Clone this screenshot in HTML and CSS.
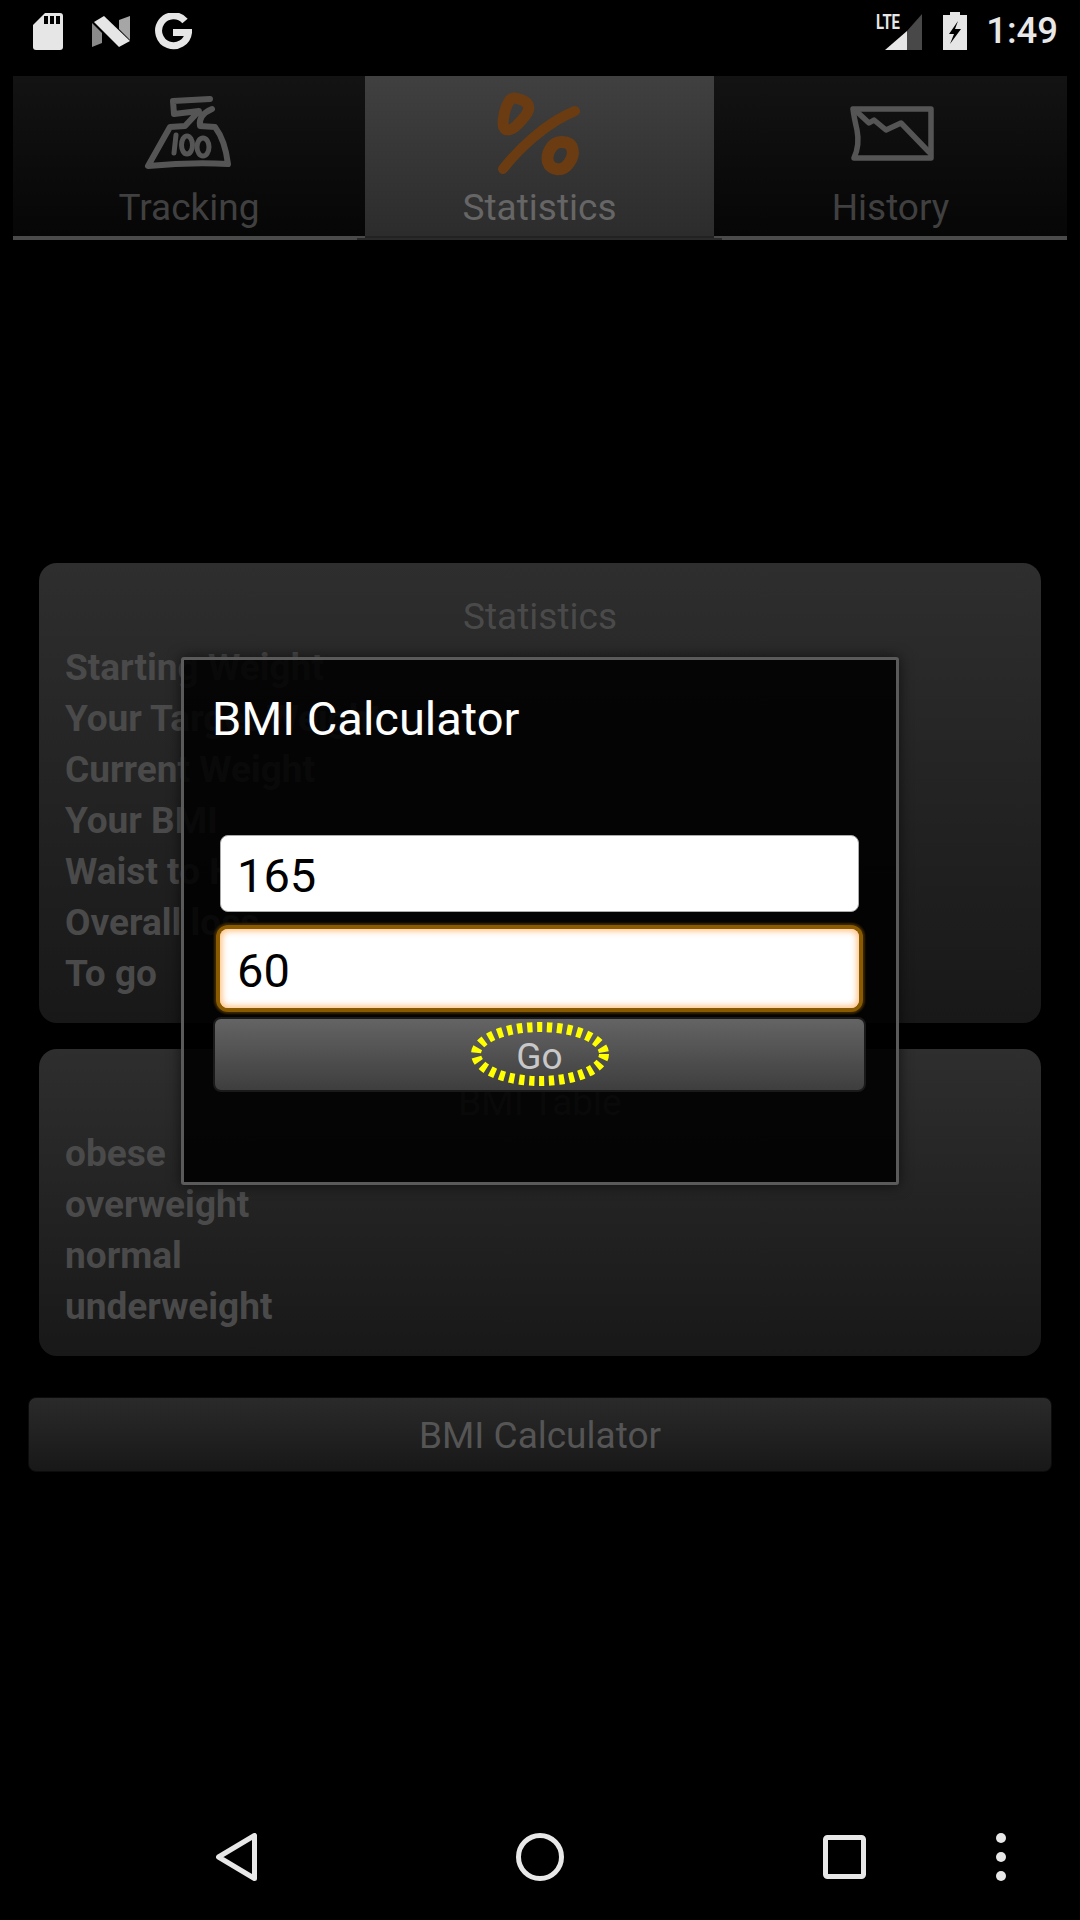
FILE: index.html
```html
<!DOCTYPE html>
<html lang="en">
<head>
  <meta charset="UTF-8" />
  <meta name="viewport" content="width=device-width, initial-scale=1.0" />
  <title>BMI Calculator</title>
  <link rel="stylesheet" href="styles.css">
</head>
<body>
  <div class="status-bar">
    <svg class="sd-icon" width="30" height="37" viewBox="0 0 30 37">
      <path fill="#e6e6e6" d="M12 0H27a3 3 0 0 1 3 3V34a3 3 0 0 1-3 3H3a3 3 0 0 1-3-3V12Z"/>
      <path fill="#000" d="M11 3h4v8h-4zM17 3h4v8h-4zM23 3h4v8h-4z"/>
    </svg>
    <svg class="n-icon" width="38" height="31" viewBox="0 0 38 31">
      <path fill="#8a8a8a" d="M0 7L10 17V27L0 31Z"/>
      <path fill="#a6a6a6" d="M27 4L38 0V24L27 13Z"/>
      <path fill="#e6e6e6" d="M2 6L12 0L38 25L27 31Z"/>
    </svg>
    <svg class="g-icon" width="37" height="37" viewBox="0 0 37 37">
      <path fill="none" stroke="#e6e6e6" stroke-width="7" d="M30 8A15 15 0 1 0 33.5 19.5H18"/>
    </svg>
    <div class="status-right">
      <svg class="signal-icon" width="46" height="41" viewBox="0 -4 46 41">
        <text class="lte-text" x="0" y="16" textLength="24" lengthAdjust="spacingAndGlyphs">LTE</text>
        <path fill="#e6e6e6" d="M9 37L31 18V37Z"/>
        <path fill="#484848" d="M31 18L46 1V37H31Z"/>
      </svg>
      <svg class="battery-icon" width="24" height="38" viewBox="0 0 24 38">
        <path fill="#e6e6e6" d="M7 0H17V3H24V38H0V3H7Z"/>
        <path fill="#000" d="M15 9L6 22H11L7 32L18 17H12Z"/>
      </svg>
      <span class="clock">1:49</span>
    </div>
  </div>

  <div class="tabs">
    <div class="tab tab-first">
      <svg class="tab-icon" width="110" height="100" viewBox="4 0 110 100">
        <g fill="none" stroke="#555" stroke-width="6" stroke-linejoin="round" stroke-linecap="round">
          <path d="M80 14L43 16L44 29L69 26L55 41L40 42L18 81Q60 77 98 79Q95 55 85 42L70 41Q68 30 82 24"/>
          <path stroke-width="5" d="M46 50L44 68"/>
          <ellipse stroke-width="5" cx="57" cy="60" rx="5.5" ry="9"/>
          <ellipse stroke-width="5" cx="73" cy="62" rx="6" ry="9"/>
        </g>
      </svg>
      <span class="tab-label">Tracking</span>
    </div>
    <div class="tab tab-active">
      <svg class="tab-icon" width="110" height="100" viewBox="0 0 110 100">
        <g fill="none" stroke="#6b3c12" stroke-linejoin="round" stroke-linecap="round">
          <path stroke-width="11" d="M30 13C24 12 19 24 18 38C18 47 26 47 33 39C41 31 47 24 42 18C38 14 34 14 30 13Z"/>
          <path stroke-width="10" d="M18 84C32 66 60 38 90 26"/>
          <path stroke-width="12" d="M76 57C66 57 61 70 63 77C66 86 78 87 84 78C90 70 90 56 76 57Z"/>
        </g>
      </svg>
      <span class="tab-label">Statistics</span>
    </div>
    <div class="tab">
      <svg class="tab-icon" width="110" height="100" viewBox="0 0 110 100">
        <g fill="none" stroke="#555" stroke-width="5.5" stroke-linejoin="round" stroke-linecap="round">
          <path d="M17 24H95V73H18Q24 60 21 45Q18 32 17 24Z"/>
          <path d="M19 25L33 38L38 35L50 45L65 38L93 67"/>
        </g>
      </svg>
      <span class="tab-label">History</span>
    </div>
  </div>

  <main class="content">
    <section class="card">
      <h2 class="card-title">Statistics</h2>
      <div class="row">Starting Weight</div>
      <div class="row">Your Target Weight</div>
      <div class="row">Current Weight</div>
      <div class="row">Your BMI</div>
      <div class="row">Waist to Hip</div>
      <div class="row">Overall loss</div>
      <div class="row">To go</div>
    </section>
    <section class="card">
      <h2 class="card-title">BMI Table</h2>
      <div class="row">obese</div>
      <div class="row">overweight</div>
      <div class="row">normal</div>
      <div class="row">underweight</div>
    </section>
    <button class="open-btn">BMI Calculator</button>
  </main>

  <div class="dialog">
    <h1 class="dialog-title">BMI Calculator</h1>
    <input class="field" type="text" value="165">
    <input class="field field-focus" type="text" value="60">
    <button class="go-btn">
      Go
      <svg class="go-ring" width="140" height="66" viewBox="0 0 140 66">
        <ellipse cx="70" cy="33" rx="64" ry="27" fill="none" stroke="#ffff00" stroke-width="10" stroke-dasharray="5.3 4.7"/>
      </svg>
    </button>
  </div>

  <div class="nav-bar">
    <svg width="41" height="48" viewBox="0 0 41 48">
      <path fill="none" stroke="#e8e8e8" stroke-width="5" stroke-linejoin="round" d="M38.5 2.5V45.5L2.5 24Z"/>
    </svg>
    <svg class="nav-gap" width="48" height="48" viewBox="0 0 48 48">
      <circle cx="24" cy="24" r="21.5" fill="none" stroke="#e8e8e8" stroke-width="5"/>
    </svg>
    <svg class="nav-gap nav-recent" width="43" height="44" viewBox="0 0 43 44">
      <rect x="2.5" y="2.5" width="38" height="39" rx="2" fill="none" stroke="#e8e8e8" stroke-width="5"/>
    </svg>
    <svg class="nav-dots" width="10" height="48" viewBox="0 0 10 48">
      <circle cx="5" cy="5" r="5" fill="#e8e8e8"/>
      <circle cx="5" cy="24" r="5" fill="#e8e8e8"/>
      <circle cx="5" cy="43" r="5" fill="#e8e8e8"/>
    </svg>
  </div>
</body>
</html>
```

FILE: styles.css
```css
body {
  margin: 0;
  height: 1920px;
  overflow: hidden;
  display: flex;
  flex-direction: column;
  background: #000;
  font-family: Roboto, sans-serif;
  color: #4a4a4a;
}
.status-bar {
  height: 76px;
  flex: none;
  display: flex;
  align-items: flex-start;
  box-sizing: border-box;
  padding: 13px 22px 0 33px;
}
.status-bar svg {
  display: block;
}
.n-icon {
  margin: 3px 0 0 29px;
}
.g-icon {
  margin-left: 25px;
}
.status-right {
  margin-left: auto;
  display: flex;
  align-items: flex-start;
}
.signal-icon {
  margin-top: -4px;
}
.lte-text {
  font-family: Roboto, sans-serif;
  font-size: 19.5px;
  font-weight: 700;
  fill: #e6e6e6;
}
.battery-icon {
  margin: -1px 0 0 21px;
}
.clock {
  margin-left: 19px;
  font-size: 36.5px;
  line-height: 36px;
  font-weight: 500;
  color: #e8e8e8;
}
.tabs {
  flex: none;
  height: 164px;
  margin: 0 13px;
  display: flex;
}
.tab {
  flex: 1;
  box-sizing: border-box;
  padding-top: 9px;
  display: flex;
  flex-direction: column;
  align-items: center;
  background: linear-gradient(#131313, #060606);
  border-bottom: 4px solid #4a4a4a;
  color: #404040;
}
.tab-first {
  flex: none;
  width: 352px;
}
.tab-active {
  position: relative;
  flex: none;
  width: 349px;
  background: linear-gradient(#404040, #2c2c2c);
  border-bottom-color: #222;
  color: #666;
}
.tab-active::after {
  content: "";
  position: absolute;
  left: -8px;
  right: -8px;
  bottom: -4px;
  height: 2px;
  background: #2a2a2a;
}
.tab-icon {
  display: block;
  flex: none;
}
.tab-label {
  margin-top: 2px;
  font-size: 37px;
  line-height: 42px;
}
.content {
  flex: 1;
  display: flex;
  flex-direction: column;
  justify-content: center;
  padding: 0 28px;
}
.card {
  margin: 0 11px 26px;
  padding: 28px 26px 24px;
  border-radius: 18px;
  background: linear-gradient(#2e2e2e, #181818);
}
.card-title {
  margin: 0;
  font-size: 37px;
  line-height: 51px;
  font-weight: 400;
  text-align: center;
}
.row {
  font-size: 37px;
  line-height: 51px;
  font-weight: 700;
}
.open-btn {
  margin-top: 15px;
  height: 75px;
  padding: 3px 0 0;
  border: 1px solid #0c0c0c;
  border-radius: 8px;
  background: linear-gradient(#2a2a2a, #181818);
  font-family: Roboto, sans-serif;
  font-size: 37px;
  color: #555;
}
.dialog {
  position: absolute;
  left: 181px;
  top: 657px;
  width: 718px;
  height: 528px;
  box-sizing: border-box;
  padding: 32px 33px 0 30px;
  border: 3px solid #5a5a5a;
  border-radius: 3px;
  background: rgba(0, 0, 0, 0.88);
  box-shadow: 0 0 14px rgba(0, 0, 0, 0.6);
}
.dialog-title {
  margin: 0 0 0 -2px;
  height: 143px;
  font-size: 47px;
  line-height: 54px;
  font-weight: 400;
  color: #fff;
}
.field {
  display: block;
  box-sizing: border-box;
  width: 639px;
  height: 77px;
  margin: 0 0 0 6px;
  padding: 4px 16px 0;
  border: 1px solid #aaa;
  border-radius: 8px;
  background: #fff;
  font-family: Roboto, sans-serif;
  font-size: 47px;
  color: #000;
}
.field-focus {
  height: 79px;
  margin-top: 17px;
  padding-left: 17px;
  border: 0;
  box-shadow: 0 0 0 4px #8a5a00, 0 0 2px 6px #3a2600, inset 0 0 6px 2px #ffc080;
}
.go-btn {
  position: relative;
  display: block;
  box-sizing: border-box;
  width: 653px;
  height: 75px;
  margin: 9px 0 0 -1px;
  padding: 3px 0 0;
  border: 2px solid #1a1a1a;
  border-radius: 8px;
  background: linear-gradient(#646464, #3e3e3e);
  font-family: Roboto, sans-serif;
  font-size: 37px;
  color: #c8c8c8;
}
.go-ring {
  position: absolute;
  left: 255px;
  top: 2px;
}
.nav-bar {
  height: 126px;
  flex: none;
  box-sizing: border-box;
  padding: 39px 0 0 216px;
  display: flex;
  align-items: flex-start;
}
.nav-gap {
  margin-left: 259px;
}
.nav-recent {
  margin-top: 2px;
}
.nav-dots {
  margin: 0 0 0 130px;
}
```
